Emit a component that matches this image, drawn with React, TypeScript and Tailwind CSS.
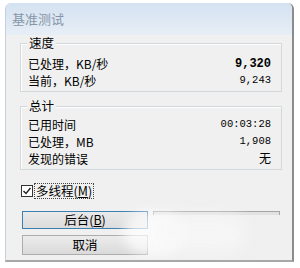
import React from "react";

const cjk = { fontFamily: '"Noto Sans CJK SC", "Noto Sans", sans-serif' };
const mono = { fontFamily: '"Liberation Mono", "DejaVu Sans Mono", monospace' };

function Row({ label, value, bold }: { label: React.ReactNode; value: React.ReactNode; bold?: boolean }) {
  return (
    <div className="flex h-[17px] items-center justify-between leading-none">
      <span className="text-[12px] text-black" style={cjk}>{label}</span>
      <span className={bold ? "text-[12px] font-bold text-black" : "text-[10.5px] text-black"} style={mono}>{value}</span>
    </div>
  );
}

function Group({ title, children, pt }: { title: string; children: React.ReactNode; pt: string }) {
  return (
    <div className={`relative w-[262px] border border-[#d3d8dc] shadow-[inset_1px_1px_0_#ffffff] pl-[7px] pr-[10px] pb-[2px] ${pt}`}>
      <span
        className="absolute left-[6px] top-[-9px] bg-[#f0f0f0] px-[2px] text-[12.5px] leading-[16px] text-black"
        style={cjk}
      >
        {title}
      </span>
      {children}
    </div>
  );
}

export default function App() {
  return (
    <div className="w-[300px] h-[268px] bg-white pt-[3px] pl-[5px] overflow-hidden">
      <div className="relative flex h-[259px] w-[289px] flex-col rounded-t-[6px] border-l border-[#c5d0dc] border-r-2 border-r-[#8c8c8c] border-b-2 border-b-[#a8a8a8] bg-[#f0f0f0] overflow-hidden">
        <div className="flex h-[32px] items-center bg-gradient-to-b from-[#d4e2f1] to-[#e7eef6] pl-[6px]">
          <span className="text-[13px] text-[#8696a8]" style={cjk}>基准测试</span>
        </div>
        <div className="flex flex-col pl-[14px] pt-[8px]">
          <Group title="速度" pt="pt-[11px]">
            <Row label="已处理，KB/秒" value="9,320" bold />
            <Row label="当前，KB/秒" value="9,243" />
          </Group>
          <div className="h-[14px]" />
          <Group title="总计" pt="pt-[9px]">
            <Row label="已用时间" value="00:03:28" />
            <Row label="已处理，MB" value="1,908" />
            <Row label="发现的错误" value={<span className="text-[12px]" style={cjk}>无</span>} />
          </Group>
          <div className="mt-[13px] ml-[1px] flex items-center">
            <div className="flex h-[12px] w-[12px] items-center justify-center border border-[#333] bg-white">
              <svg width="10" height="10" viewBox="0 0 10 10">
                <path d="M1.5 5 L4 7.5 L8.5 2" fill="none" stroke="#222" strokeWidth="1.4" />
              </svg>
            </div>
            <span className="ml-[1px] border border-dotted border-[#444] px-[1px] text-[12.5px] leading-[14px] text-black" style={cjk}>
              多线程(<span className="underline">M</span>)
            </span>
          </div>
          <div className="mt-[12px] ml-[2px] flex items-start gap-[5px]">
            <div className="flex h-[18px] w-[126px] items-center justify-center border border-[#3c7fb1] bg-gradient-to-b from-[#eaeaea] to-[#dcdcdc] text-[12.5px] leading-none text-black" style={cjk}>
              后台(<span className="underline">B</span>)
            </div>
            <div className="h-[4px] w-[127px] border-x border-t border-[#a6a6a6] bg-[#e2e2e2]" />
          </div>
          <div className="mt-[6px] ml-[2px] flex h-[20px] w-[126px] items-center justify-center border border-[#adadad] bg-gradient-to-b from-[#ececec] to-[#dadada] text-[12.5px] leading-none text-black" style={cjk}>
            取消
          </div>
        </div>
        <div className="pointer-events-none absolute left-[118px] top-[208px] h-[44px] w-[60px] rounded-full bg-white opacity-70 blur-[6px]" />
        <div className="pointer-events-none absolute left-[150px] top-[212px] h-[36px] w-[90px] rounded-full bg-[#f7f7f7] opacity-80 blur-[8px]" />
      </div>
    </div>
  );
}
